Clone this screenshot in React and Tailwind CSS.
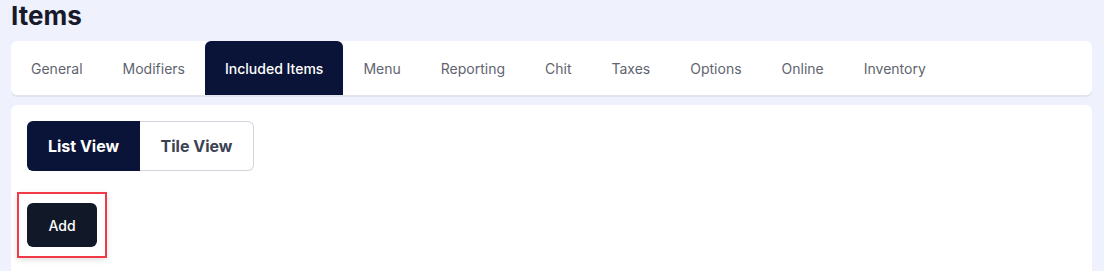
import React, { useState } from "react";

const tabs = [
  "General",
  "Modifiers",
  "Included Items",
  "Menu",
  "Reporting",
  "Chit",
  "Taxes",
  "Options",
  "Online",
  "Inventory",
];

export default function App() {
  const [active, setActive] = useState("Included Items");
  const [view, setView] = useState("list");

  return (
    <div
      className="h-[271px] overflow-hidden bg-[#eff1fd] pl-[11px] pr-[12px]"
      style={{ fontFamily: "Inter, 'Noto Sans', sans-serif" }}
    >
      {/* Title */}
      <h1 className="text-[26px] font-bold leading-[32px] text-[#171a2b] mb-[9px]">
        Items
      </h1>

      {/* Tabs */}
      <div className="bg-white rounded-md shadow-[0_2px_0_0_#e2e4ec] flex h-[54px]">
        {tabs.map((tab) => (
          <button
            key={tab}
            onClick={() => setActive(tab)}
            className={
              "px-5 h-full text-[14px] rounded-t-md " +
              (active === tab
                ? "bg-[#0a1438] text-white font-medium"
                : "text-[#5f6470]")
            }
          >
            {tab}
          </button>
        ))}
      </div>

      {/* Content */}
      <div className="bg-white rounded-t-md mt-[10px] p-4 h-[166px]">
        <div className="flex">
          <button
            onClick={() => setView("list")}
            className={
              "w-[113px] h-[50px] rounded-l-md text-[16px] font-bold " +
              (view === "list"
                ? "bg-[#0a1438] text-white"
                : "bg-white text-[#3b4252] border border-[#d1d5db]")
            }
          >
            List View
          </button>
          <button
            onClick={() => setView("tile")}
            className={
              "w-[114px] h-[50px] rounded-r-md text-[16px] font-bold " +
              (view === "tile"
                ? "bg-[#0a1438] text-white"
                : "bg-white text-[#3b4252] border border-[#d1d5db] border-l-0")
            }
          >
            Tile View
          </button>
        </div>

        <div className="mt-[21px] -ml-[10px] inline-block border-2 border-[#f03a47] px-[8px] py-[9px] shadow-[0_2px_6px_rgba(0,0,0,0.12)]">
          <button className="bg-[#111827] text-white text-[14px] font-medium w-[70px] h-[44px] rounded-md">
            Add
          </button>
        </div>
      </div>
    </div>
  );
}
